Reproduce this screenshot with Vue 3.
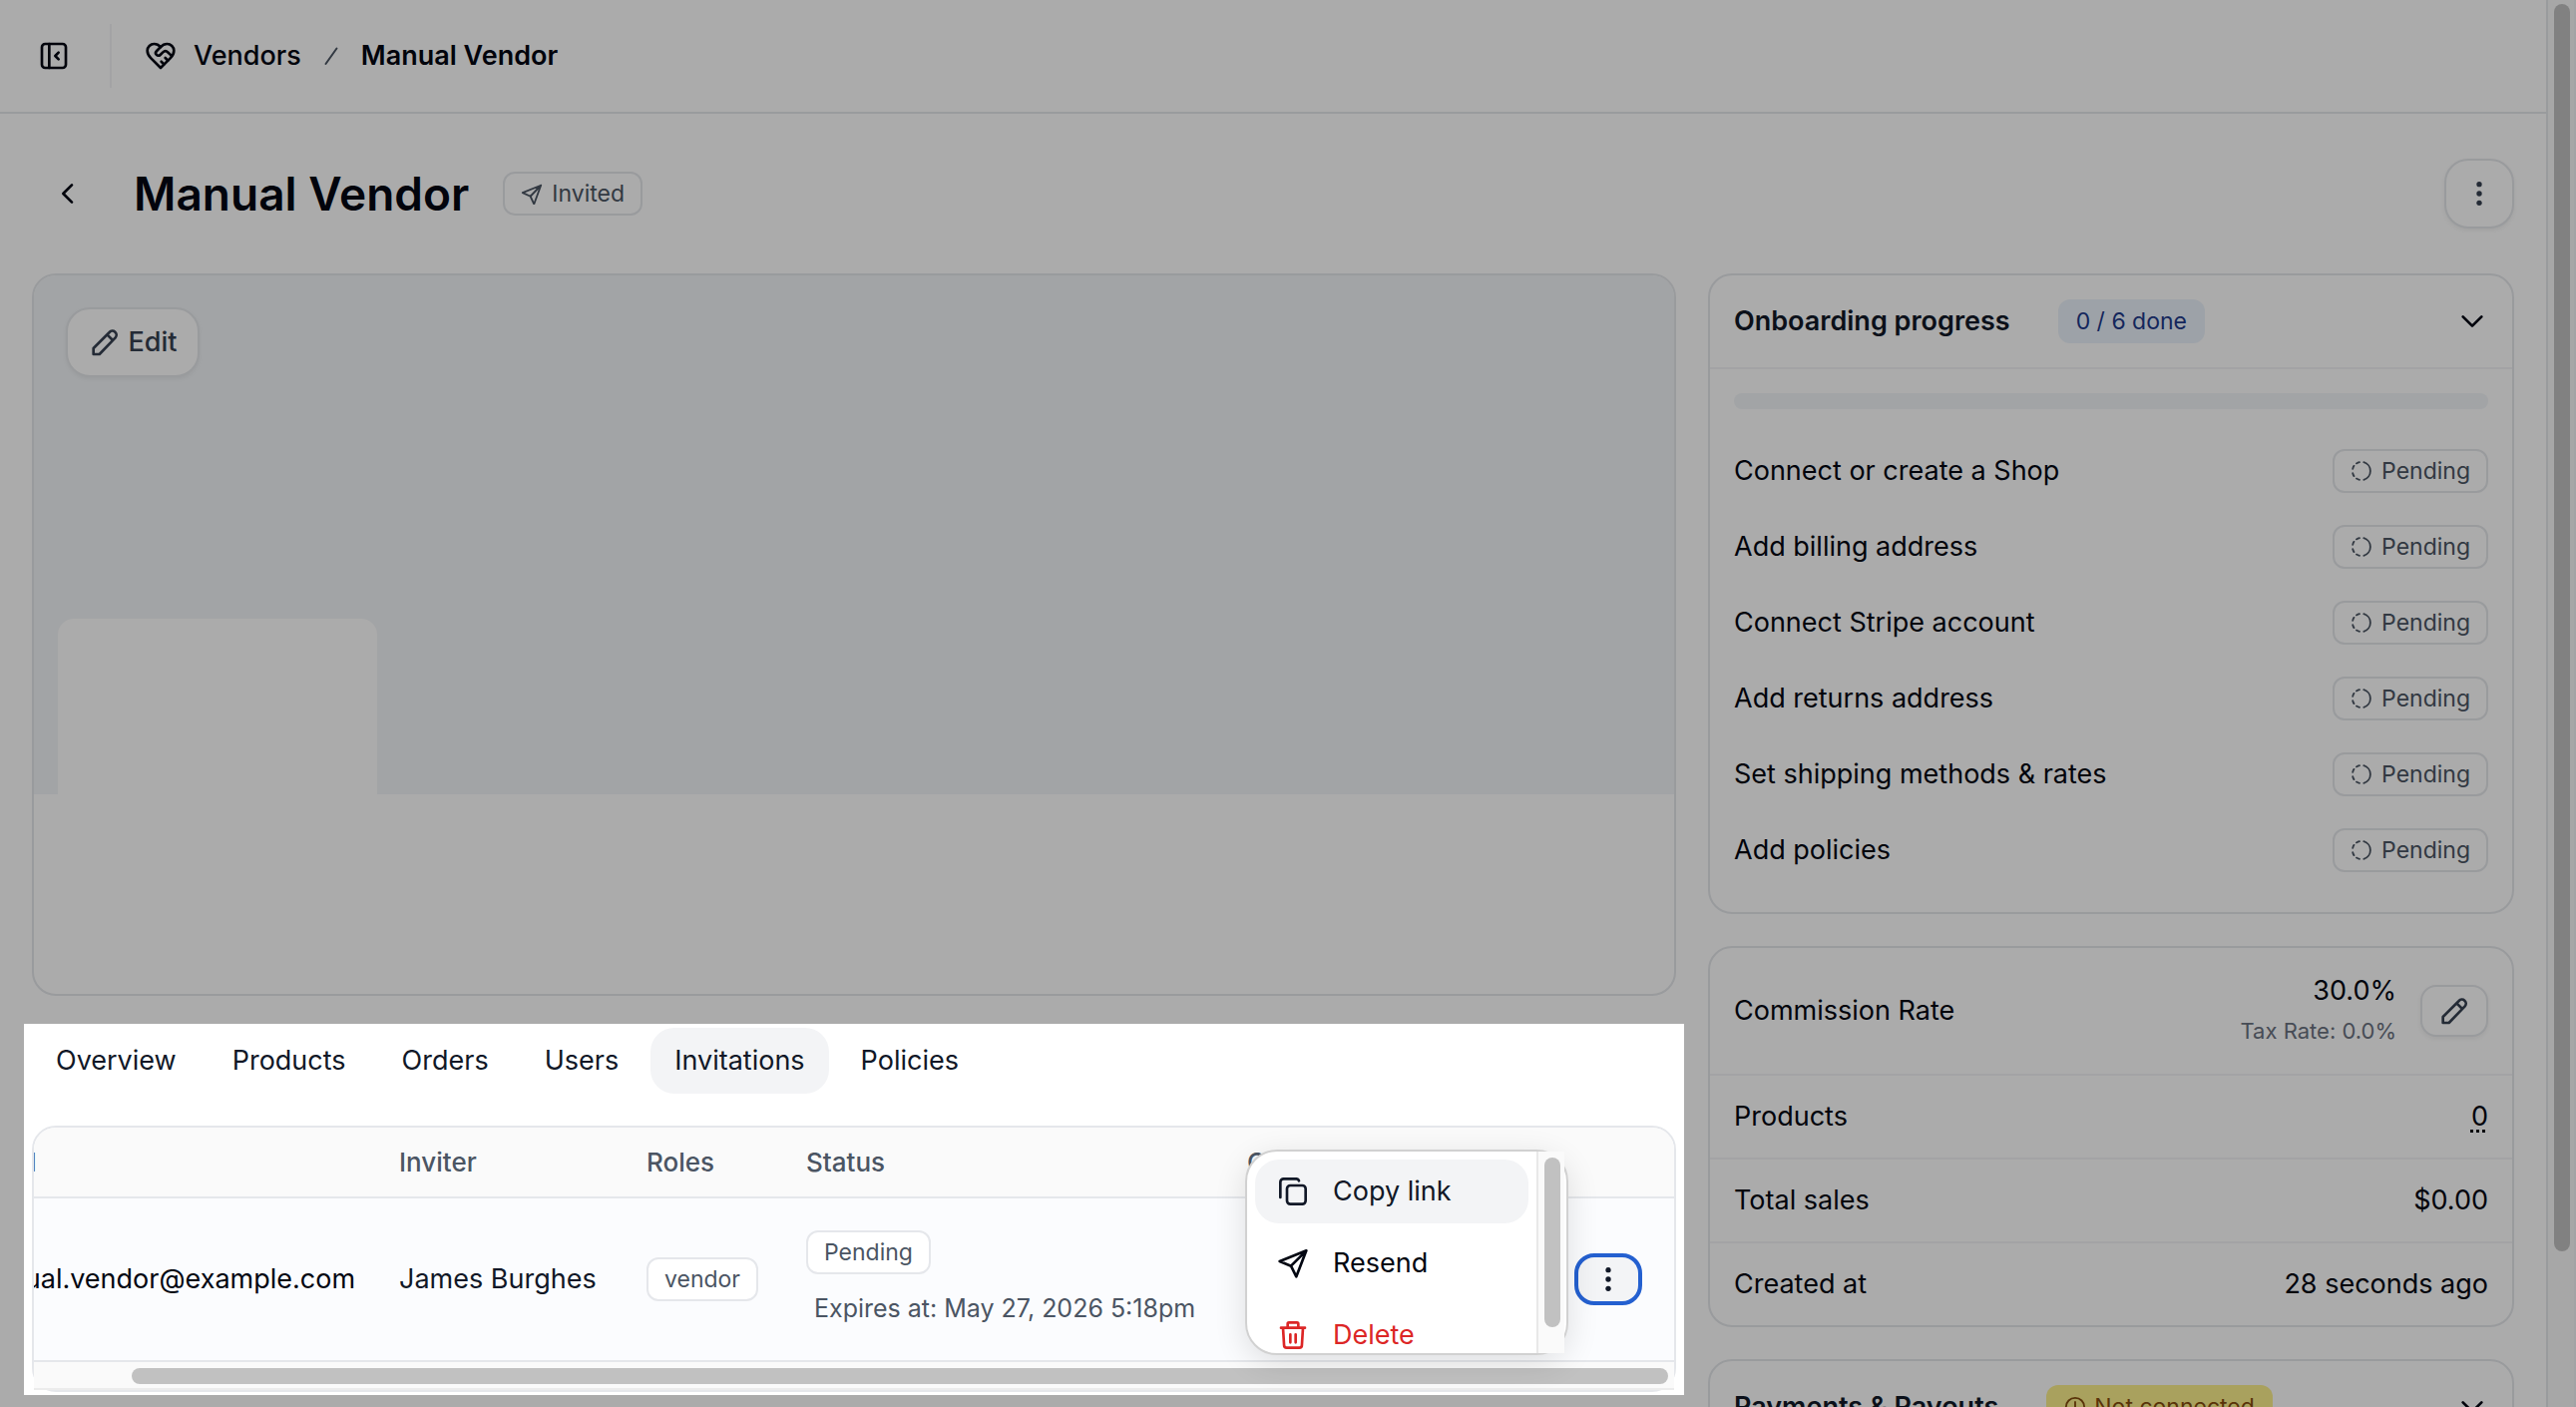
<script setup>
import { onMounted, ref } from 'vue';

const tasks = [
    'Connect or create a Shop',
    'Add billing address',
    'Connect Stripe account',
    'Add returns address',
    'Set shipping methods & rates',
    'Add policies',
];

const tabs = ['Overview', 'Products', 'Orders', 'Users', 'Invitations', 'Policies'];
const activeTab = ref('Invitations');

const scroller = ref(null);

onMounted(() => {
    // the invitations table opens scrolled to its row actions
    scroller.value.scrollLeft = scroller.value.scrollWidth;
});
</script>

<template>
    <div class="app">
        <div class="page">
            <header class="topbar">
                <button type="button" class="bare" aria-label="Collapse sidebar">
                    <svg class="icon" viewBox="0 0 24 24">
                        <rect x="3" y="3" width="18" height="18" rx="2.5" />
                        <path d="M8.5 3v18M15.500 9.500l-2.500 2.500 2.500 2.500" />
                    </svg>
                </button>
                <span class="divider"></span>
                <nav class="crumbs" aria-label="Breadcrumb">
                    <svg class="icon" viewBox="0 0 24 24">
                        <path d="M19.4 13.6C20.9 12.1 22 10.3 22 8.1A5.1 5.1 0 0 0 16.8 3c-1.8 0-3.2.6-4.8 2.3C10.4 3.6 9 3 7.2 3A5.1 5.1 0 0 0 2 8.1c0 2.2 1.1 4 2.6 5.5L12 21z" />
                        <path d="M12 5.3 8.9 8.4a2 2 0 0 0 0 2.8c.8.8 2 .8 2.8 0l2-1.9a2.800 2.800 0 0 1 3.800 0l2.500 2.400M17.500 15.500l-2-2M14.500 18.300l-2-2" />
                    </svg>
                    <a href="#vendors">Vendors</a>
                    <svg class="icon slash" viewBox="0 0 26 26"><path d="M7.500 21 18.500 5.500" /></svg>
                    <strong>Manual Vendor</strong>
                </nav>
            </header>

            <main class="content">
                <div class="titlebar">
                    <button type="button" class="bare back" aria-label="Back">
                        <svg class="icon" viewBox="0 0 24 24"><path d="m15 5.500-6.500 6.500 6.500 6.500" /></svg>
                    </button>
                    <h1>Manual Vendor</h1>
                    <span class="badge">
                        <svg class="icon small" viewBox="0 0 24 24">
                            <path d="M22 3 2 11l8.500 4 4 8.500zM22 3 10.500 15" />
                        </svg>
                        Invited
                    </span>
                    <button type="button" class="btn square" aria-label="More actions">
                        <svg class="dots" viewBox="0 0 24 24">
                            <circle cx="12" cy="4" r="2.300" /><circle cx="12" cy="12" r="2.300" /><circle cx="12" cy="20" r="2.300" />
                        </svg>
                    </button>
                </div>

                <div class="columns">
                    <div class="left">
                        <section class="hero">
                            <div class="banner">
                                <button type="button" class="btn edit">
                                    <svg class="icon" viewBox="0 0 24 24">
                                        <path d="M3.500 21v-4.500L15.500 4.500a2.800 2.800 0 0 1 4.500 4L8 21zM14 6.500l4 4" />
                                    </svg>
                                    Edit
                                </button>
                                <div class="logo"></div>
                            </div>
                        </section>

                        <section class="spotlight">
                            <div class="tabs" role="tablist">
                                <button
                                    v-for="tab in tabs"
                                    :key="tab"
                                    type="button"
                                    role="tab"
                                    :aria-selected="tab === activeTab"
                                    :class="['tab', { active: tab === activeTab }]"
                                    @click="activeTab = tab"
                                >{{ tab }}</button>
                            </div>

                            <div class="table-card">
                                <div ref="scroller" class="scroller">
                                    <table>
                                        <colgroup>
                                            <col class="c-email" /><col class="c-inviter" /><col class="c-roles" />
                                            <col class="c-status" /><col class="c-created" /><col class="c-actions" />
                                        </colgroup>
                                        <thead>
                                            <tr>
                                                <th>Email</th>
                                                <th>Inviter</th>
                                                <th>Roles</th>
                                                <th>Status</th>
                                                <th>Created</th>
                                                <th></th>
                                            </tr>
                                        </thead>
                                        <tbody>
                                            <tr>
                                                <td class="email">manual.vendor@example.com</td>
                                                <td>James Burghes</td>
                                                <td><span class="badge">vendor</span></td>
                                                <td>
                                                    <span class="badge">Pending</span>
                                                    <p class="expires">Expires at: May 27, 2026 5:18pm</p>
                                                </td>
                                                <td></td>
                                                <td>
                                                    <button type="button" class="row-menu" aria-label="Invitation actions" aria-expanded="true">
                                                        <svg class="dots" viewBox="0 0 24 24">
                                                            <circle cx="12" cy="4" r="2.300" /><circle cx="12" cy="12" r="2.300" /><circle cx="12" cy="20" r="2.300" />
                                                        </svg>
                                                    </button>
                                                </td>
                                            </tr>
                                        </tbody>
                                    </table>
                                </div>
                                <div class="hbar"><span></span></div>
                                <div class="menu" role="menu">
                                    <div class="items">
                                        <button type="button" role="menuitem" class="item active">
                                            <svg class="icon" viewBox="0 0 24 24">
                                                <rect x="7.500" y="7.500" width="14" height="14" rx="2.500" />
                                                <path d="M2.500 16.500V5a2.500 2.500 0 0 1 2.500-2.500h9.500q1.500 0 2 1.500" />
                                            </svg>
                                            Copy link
                                        </button>
                                        <button type="button" role="menuitem" class="item">
                                            <svg class="icon" viewBox="0 0 24 24">
                                                <path d="M22 2.500 2 10.500l8.500 3.500 4 8zM22 2.500 10.500 14" />
                                            </svg>
                                            Resend
                                        </button>
                                        <button type="button" role="menuitem" class="item danger">
                                            <svg class="icon" viewBox="0 0 24 24">
                                                <path d="M3 6.500h18M8 6.500v-3a1 1 0 0 1 1-1h6a1 1 0 0 1 1 1v3M4.500 6.500l.8 13a2 2 0 0 0 2 2h9.400a2 2 0 0 0 2-2l.8-13M10 11.500v6M14 11.500v6" />
                                            </svg>
                                            Delete
                                        </button>
                                    </div>
                                    <div class="menu-bar"><span></span></div>
                                </div>
                            </div>
                        </section>
                    </div>

                    <aside class="right">
                        <section class="card">
                            <div class="card-head">
                                <h2>Onboarding progress</h2>
                                <span class="pill blue">0 / 6 done</span>
                                <svg class="icon chevron" viewBox="0 0 24 24"><path d="m5 8.500 7 7 7-7" /></svg>
                            </div>
                            <div class="progress"></div>
                            <ul class="tasks">
                                <li v-for="task in tasks" :key="task">
                                    {{ task }}
                                    <span class="badge">
                                        <svg class="icon small" viewBox="0 0 24 24">
                                            <path d="M14.500 2.400a10 10 0 0 1 0 19.200M9.800 21.700a10 10 0 0 1-3.300-1.400M3.800 17.600a10 10 0 0 1-1.400-3.200M2.400 9.700a10 10 0 0 1 1.400-3.300M6.500 3.700a10 10 0 0 1 3.300-1.400" />
                                        </svg>
                                        Pending
                                    </span>
                                </li>
                            </ul>
                        </section>

                        <section class="card">
                            <div class="fact tall">
                                Commission Rate
                                <div class="rate">
                                    <div>30.0%</div>
                                    <div class="tax">Tax Rate: 0.0%</div>
                                </div>
                                <button type="button" class="btn pencil" aria-label="Edit commission rate">
                                    <svg class="icon" viewBox="0 0 24 24">
                                        <path d="M3.500 21v-4.500L15.500 4.500a2.800 2.800 0 0 1 4.500 4L8 21zM14 6.500l4 4" />
                                    </svg>
                                </button>
                            </div>
                            <div class="fact">Products <a href="#products">0</a></div>
                            <div class="fact">Total sales <span>$0.00</span></div>
                            <div class="fact">Created at <span>28 seconds ago</span></div>
                        </section>

                        <section class="card">
                            <div class="card-head">
                                <h2>Payments &amp; Payouts</h2>
                                <span class="pill yellow">
                                    <svg class="icon small" viewBox="0 0 24 24">
                                        <circle cx="12" cy="12" r="10" /><path d="M12 6.500v6.500M12 17v.5" />
                                    </svg>
                                    Not connected
                                </span>
                                <svg class="icon chevron" viewBox="0 0 24 24"><path d="m5 8.500 7 7 7-7" /></svg>
                            </div>
                        </section>
                    </aside>
                </div>
            </main>
        </div>
        <div class="page-bar"><span></span></div>
    </div>
</template>

<style>
body {
    margin: 0;
    overflow: hidden;
}
</style>

<style scoped>
.app {
    display: flex;
    height: 100vh;
    overflow: hidden;
    background: #fff;
    color: #030712;
    font-family: Inter, "Liberation Sans", sans-serif;
    font-size: 27px;
    line-height: 40px;
}

.app * {
    box-sizing: border-box;
}

.page {
    flex: 1;
    min-width: 0;
}

button {
    font: inherit;
    color: inherit;
    cursor: pointer;
}

a {
    color: inherit;
    text-decoration: none;
}

.icon {
    flex: none;
    width: 32px;
    height: 32px;
    fill: none;
    stroke: currentColor;
    stroke-width: 2;
    stroke-linecap: round;
    stroke-linejoin: round;
}

.icon.small {
    width: 22px;
    height: 22px;
}

.dots {
    flex: none;
    width: 28px;
    height: 28px;
    fill: currentColor;
}

.bare {
    display: flex;
    padding: 0;
    border: none;
    background: none;
}

.topbar {
    display: flex;
    align-items: center;
    height: 114px;
    padding-left: 38px;
    border-bottom: 2px solid #e5e7eb;
}

.divider {
    width: 2px;
    height: 64px;
    margin: 0 33px 0 40px;
    background: #f3f4f6;
}

.crumbs {
    display: flex;
    align-items: center;
    gap: 17px;
    font-weight: 500;
}

.crumbs strong {
    font-weight: 600;
}

.icon.slash {
    width: 26px;
    height: 26px;
    color: #4b5563;
}

.content {
    padding: 0 32px;
}

.titlebar {
    display: flex;
    align-items: center;
    height: 160px;
}

.back {
    width: 102px;
    padding-left: 20px;
}

h1 {
    margin: 0 34px 0 0;
    font-size: 46px;
    font-weight: 600;
}

.badge {
    display: inline-flex;
    align-items: center;
    gap: 9px;
    height: 44px;
    padding: 0 16px;
    border: 2px solid #e5e7eb;
    border-radius: 12px;
    background: #fff;
    color: #4b5563;
    font-size: 23px;
    vertical-align: top;
}

.btn {
    display: flex;
    align-items: center;
    justify-content: center;
    gap: 8px;
    height: 70px;
    border: 2px solid #e5e7eb;
    border-radius: 24px;
    background: #fff;
    color: #374151;
    box-shadow: 0 2px 4px rgba(0, 0, 0, 0.06);
}

.square {
    width: 70px;
    margin-left: auto;
}

.columns {
    display: grid;
    grid-template-columns: minmax(0, 1648fr) minmax(0, 808fr);
    gap: 32px;
}

.hero {
    height: 724px;
    border: 2px solid #e5e7eb;
    border-radius: 24px;
    overflow: hidden;
}

.banner {
    display: flex;
    flex-direction: column;
    justify-content: space-between;
    align-items: flex-start;
    height: 520px;
    padding: 32px 24px 0;
    background: #f2f5f8;
}

.edit {
    width: 134px;
    margin-left: 8px;
    font-weight: 500;
}

.logo {
    width: 320px;
    height: 176px;
    border-radius: 16px 16px 0 0;
    background: #fff;
}

/* dims everything on the page except this block */
.spotlight {
    position: relative;
    z-index: 1;
    margin: 28px -8px 0;
    padding: 4px 8px 3px;
    box-shadow: 0 0 0 3000px rgba(0, 0, 0, 0.33);
}

.tabs {
    display: flex;
    gap: 8px;
    margin-bottom: 32px;
}

.tab {
    height: 66px;
    padding: 0 24px;
    border: none;
    border-radius: 24px;
    background: none;
    color: #111827;
}

.tab.active {
    background: #f3f4f6;
}

.table-card {
    position: relative;
    border: 2px solid #e5e7eb;
    border-radius: 24px;
}

.scroller {
    overflow: hidden;
    border-radius: 22px 22px 0 0;
}

table {
    width: 1732px;
    table-layout: fixed;
    border-collapse: separate;
    border-spacing: 0;
    text-align: left;
}

.c-email { width: 430px; }
.c-inviter { width: 248px; }
.c-roles { width: 160px; }
.c-status { width: 442px; }
.c-created { width: 328px; }
.c-actions { width: 124px; }

th,
td {
    padding: 0 24px;
    border-bottom: 2px solid #e5e7eb;
    white-space: nowrap;
}

th {
    height: 71px;
    background: #fafafa;
    color: #4b5563;
    font-size: 26px;
    font-weight: 500;
}

td {
    height: 164px;
    background: #fbfcfe;
    color: #111827;
}

td.email {
    color: #030712;
}

.expires {
    margin: 14px 0 0;
    padding-left: 8px;
    color: #4b5563;
    font-size: 25px;
}

.row-menu {
    display: flex;
    align-items: center;
    justify-content: center;
    width: 68px;
    height: 52px;
    border: 4px solid #2460d0;
    border-radius: 20px;
    background: #f3f4f6;
}

.hbar {
    height: 28px;
    padding: 6px 6px 6px 98px;
    border-bottom: 2px solid #ececec;
    background: #fafafa;
}

.hbar span {
    display: block;
    height: 16px;
    border-radius: 8px;
    background: #c1c1c1;
}

.menu {
    position: absolute;
    top: 22px;
    right: 106px;
    display: flex;
    width: 324px;
    height: 206px;
    border: 2px solid #d1d1d1;
    border-radius: 32px;
    background: #fff;
    box-shadow: 0 8px 32px rgba(0, 0, 0, 0.12);
}

.items {
    flex: 1;
    padding: 8px;
    border-radius: 30px 0 0 30px;
    overflow: hidden;
}

.item {
    display: flex;
    align-items: center;
    gap: 24px;
    width: 100%;
    height: 64px;
    margin-bottom: 8px;
    padding: 0 22px;
    border: none;
    border-radius: 24px;
    background: none;
}

.item.active {
    background: #f3f4f6;
    color: #111827;
}

.item.danger {
    color: #dc2626;
}

.menu-bar {
    width: 28px;
    margin-right: 2px;
    padding: 6px 4px 0 6px;
    border-left: 2px solid #e8e8e8;
    background: #fafafa;
}

.menu-bar span {
    display: block;
    height: 170px;
    border-radius: 8px;
    background: #c1c1c1;
}

.right {
    display: flex;
    flex-direction: column;
    gap: 32px;
}

.card {
    border: 2px solid #e5e7eb;
    border-radius: 24px;
}

.card-head {
    display: flex;
    align-items: center;
    height: 94px;
    padding: 0 24px;
    border-bottom: 2px solid #f3f4f6;
}

h2 {
    margin: 0 48px 0 0;
    color: #111827;
    font-size: 27px;
    font-weight: 600;
}

.pill {
    display: flex;
    align-items: center;
    gap: 8px;
    height: 44px;
    padding: 0 18px;
    border-radius: 12px;
    font-size: 23px;
}

.blue {
    background: #ebf2fb;
    color: #1e3a8a;
}

.yellow {
    background: #fdf08c;
    color: #854d0e;
}

.chevron {
    margin-left: auto;
}

.progress {
    height: 16px;
    margin: 24px;
    border-radius: 8px;
    background: #f2f5f8;
}

.tasks {
    margin: 0;
    padding: 0 24px 24px;
    list-style: none;
}

.tasks li {
    display: flex;
    align-items: center;
    justify-content: space-between;
    height: 76px;
}

.fact {
    display: flex;
    align-items: center;
    justify-content: space-between;
    height: 84px;
    padding: 0 24px;
    border-bottom: 2px solid #f3f4f6;
}

.fact:last-child {
    height: 82px;
    border-bottom: none;
}

.fact.tall {
    height: 128px;
}

.fact a {
    text-decoration: underline dotted 3px;
    text-underline-offset: 4px;
}

.rate {
    margin-left: auto;
    text-align: right;
}

.tax {
    color: #6b7280;
    font-size: 22px;
}

.pencil {
    width: 68px;
    height: 52px;
    margin-left: 24px;
    border-radius: 16px;
}

.page-bar {
    width: 30px;
    padding: 4px 4px 4px 6px;
    border-right: 2px solid #f3f4f6;
    border-left: 2px solid #e5e7eb;
    background: #fafafa;
}

.page-bar span {
    display: block;
    height: 1250px;
    border-radius: 8px;
    background: #c1c1c1;
}
</style>
